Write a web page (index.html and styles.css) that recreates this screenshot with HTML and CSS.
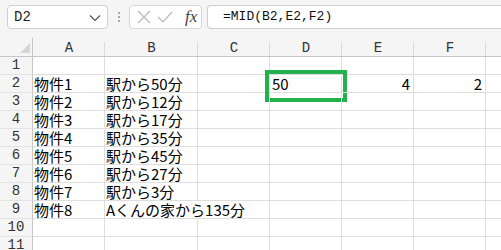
FILE: index.html
```html
<!DOCTYPE html>
<html lang="ja">
<head>
  <meta charset="UTF-8">
  <title>MID関数</title>
  <link rel="stylesheet" href="styles.css">
</head>
<body>
  <!-- formula bar -->
  <div class="toolbar">
    <div class="namebox">
      <span>D2</span>
      <svg class="chev" width="12" height="8" viewBox="0 0 12 8"><path d="M1 1.5 L6 6.5 L11 1.5" fill="none" stroke="#555" stroke-width="1.2"/></svg>
    </div>
    <div class="dots"><i></i><i></i><i></i></div>
    <div class="fxbox">
      <svg width="14" height="14" viewBox="0 0 14 14"><path d="M1 1 L13 13 M13 1 L1 13" stroke="#b9b9b9" stroke-width="1.2"/></svg>
      <svg width="16" height="14" viewBox="0 0 16 14"><path d="M1 7 L6 12 L15 2" fill="none" stroke="#b9b9b9" stroke-width="1.2"/></svg>
      <span class="fx">fx</span>
    </div>
    <div class="formula">=MID(B2,E2,F2)</div>
  </div>

  <!-- sheet -->
  <div class="sheet">
    <div class="corner"><span class="tri"></span></div>
    <div class="colhead">A</div>
    <div class="colhead">B</div>
    <div class="colhead">C</div>
    <div class="colhead">D</div>
    <div class="colhead">E</div>
    <div class="colhead">F</div>
    <div class="colhead">G</div>

    <div class="rowhead">1</div>
    <div class="cell"></div><div class="cell"></div><div class="cell"></div><div class="cell"></div><div class="cell"></div><div class="cell"></div><div class="cell"></div>

    <div class="rowhead">2</div>
    <div class="cell">物件1</div><div class="cell">駅から50分</div><div class="cell"></div>
    <div class="cell picked">50<span class="mark"></span></div>
    <div class="cell num">4</div><div class="cell num">2</div><div class="cell"></div>

    <div class="rowhead">3</div>
    <div class="cell">物件2</div><div class="cell">駅から12分</div><div class="cell"></div><div class="cell"></div><div class="cell"></div><div class="cell"></div><div class="cell"></div>

    <div class="rowhead">4</div>
    <div class="cell">物件3</div><div class="cell">駅から17分</div><div class="cell"></div><div class="cell"></div><div class="cell"></div><div class="cell"></div><div class="cell"></div>

    <div class="rowhead">5</div>
    <div class="cell">物件4</div><div class="cell">駅から35分</div><div class="cell"></div><div class="cell"></div><div class="cell"></div><div class="cell"></div><div class="cell"></div>

    <div class="rowhead">6</div>
    <div class="cell">物件5</div><div class="cell">駅から45分</div><div class="cell"></div><div class="cell"></div><div class="cell"></div><div class="cell"></div><div class="cell"></div>

    <div class="rowhead">7</div>
    <div class="cell">物件6</div><div class="cell">駅から27分</div><div class="cell"></div><div class="cell"></div><div class="cell"></div><div class="cell"></div><div class="cell"></div>

    <div class="rowhead">8</div>
    <div class="cell">物件7</div><div class="cell">駅から3分</div><div class="cell"></div><div class="cell"></div><div class="cell"></div><div class="cell"></div><div class="cell"></div>

    <div class="rowhead">9</div>
    <div class="cell">物件8</div><div class="cell spill">Aくんの家から135分</div><div class="cell"></div><div class="cell"></div><div class="cell"></div><div class="cell"></div><div class="cell"></div>

    <div class="rowhead">10</div>
    <div class="cell"></div><div class="cell"></div><div class="cell"></div><div class="cell"></div><div class="cell"></div><div class="cell"></div><div class="cell"></div>

    <div class="rowhead">11</div>
    <div class="cell"></div><div class="cell"></div><div class="cell"></div><div class="cell"></div><div class="cell"></div><div class="cell"></div><div class="cell"></div>
  </div>
</body>
</html>
```

FILE: styles.css
```css
/* page */
body {
  margin: 0;
  background: #fff;
  font-family: "Noto Sans CJK JP", sans-serif;
  color: #000;
  overflow: hidden;
}
/* formula bar across the top */
.toolbar {
  display: flex;
  align-items: center;
  height: 38px;
  padding-left: 7px;
  background: #f5f5f5;
  box-sizing: border-box;
  padding-bottom: 5px;
  padding-top: 1px;
}
.namebox {
  width: 101px;
  height: 24px;
  box-sizing: border-box;
  border: 1px solid #cfcfcf;
  border-radius: 4px;
  background: #fff;
  display: flex;
  align-items: center;
  justify-content: space-between;
  padding: 0 6px 0 6px;
  font-family: "Liberation Mono", monospace;
  font-size: 14px;
  color: #222;
}
.chev {
  margin-top: 1px;
}
.dots {
  width: 21px;
  display: flex;
  flex-direction: column;
  align-items: center;
  gap: 2px;
}
.dots i {
  width: 2px;
  height: 2px;
  background: #a8a8a8;
}
.fxbox {
  width: 73px;
  height: 24px;
  box-sizing: border-box;
  border: 1px solid #d6d6d6;
  border-radius: 4px;
  background: #fff;
  display: flex;
  align-items: center;
  gap: 6px;
  padding-left: 7px;
}
.fx {
  font-family: "Liberation Serif", serif;
  font-style: italic;
  font-size: 17px;
  color: #444;
  margin-left: 6px;
}
.formula {
  flex: 1;
  height: 24px;
  box-sizing: border-box;
  margin-left: 5px;
  border: 1px solid #cfcfcf;
  border-right: none;
  border-radius: 4px 0 0 4px;
  background: #fff;
  padding-left: 15px;
  font-family: "Liberation Mono", monospace;
  font-size: 13px;
  line-height: 22px;
  color: #111;
}
/* grid */
.sheet {
  display: grid;
  grid-template-columns: 33px 72px 93px 72px 72px 72px 72px 72px;
  grid-auto-rows: 18px;
  grid-template-rows: 19px;
}
.corner, .colhead, .rowhead, .cell {
  box-sizing: border-box;
  white-space: nowrap;
}
.corner {
  background: #f5f5f5;
  border-right: 1px solid #c6c6c6;
  border-bottom: 1px solid #c6c6c6;
  position: relative;
}
.tri {
  position: absolute;
  right: 2px;
  bottom: 3px;
  width: 0;
  height: 0;
  border-left: 10px solid transparent;
  border-bottom: 10px solid #d6d6d6;
}
.colhead {
  background: #f5f5f5;
  border-bottom: 1px solid #c6c6c6;
  text-align: center;
  font-size: 14px;
  line-height: 15px;
  padding-top: 3px;
  color: #333;
  position: relative;
  font-family: "Liberation Mono", monospace;
}
.colhead::after {
  content: "";
  position: absolute;
  right: 0;
  top: 4px;
  bottom: 0;
  width: 1px;
  background: #dcdcdc;
}
.rowhead {
  background: #f5f5f5;
  border-right: 1px solid #c6c6c6;
  border-bottom: 1px solid #e3e3e3;
  text-align: center;
  font-family: "Liberation Mono", monospace;
  font-size: 14px;
  line-height: 17px;
  color: #333;
}
.cell {
  border-right: 1px solid #dedede;
  border-bottom: 1px solid #dedede;
  padding-left: 1px;
  font-size: 15px;
  line-height: 17px;
  overflow: visible;
  position: relative;
}
.cell.num {
  text-align: right;
  padding-right: 3px;
}
.cell.spill {
  border-right-color: transparent;
  z-index: 1;
}
.cell.picked {
  padding-left: 2px;
}
/* annotation box around D2 */
.mark {
  position: absolute;
  left: -5px;
  top: -5px;
  width: 82px;
  height: 32px;
  box-sizing: border-box;
  border: 4px solid #22b14c;
}
```
